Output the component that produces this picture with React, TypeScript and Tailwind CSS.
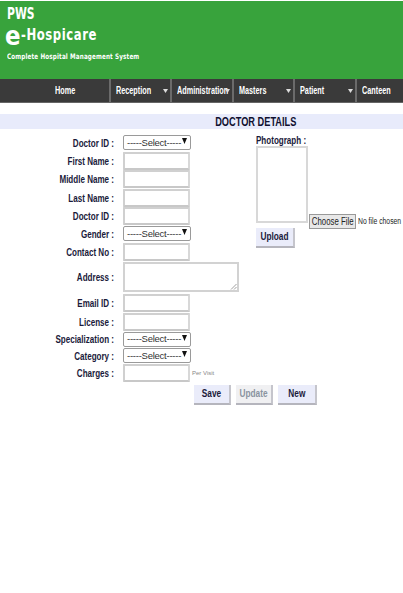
function Label({ children }: { children: string }) {
  return <span className="w-[114px] shrink-0 origin-right scale-x-[0.7] whitespace-nowrap pt-[2px] text-right text-[11.5px] font-bold leading-none text-[#1a1a3a]">{children}</span>;
}
function Row({ label, h, children }: { label: string; h: string; children: React.ReactNode }) {
  return (
    <div className={`flex items-center gap-[9px] ${h}`}>
      <Label>{label}</Label>
      {children}
    </div>
  );
}
function TextBox() {
  return <div className="h-[18px] w-[67px] shrink-0 rounded-[1px] border-2 border-t-[#d0d0d0] border-l-[#d0d0d0] border-r-[#d8d8d8] border-b-[#c8c8c8] bg-white" />;
}
function Select() {
  return (
    <div className="relative flex h-[15px] w-[68px] shrink-0 items-center rounded-[2px] border border-[#9a9a9a] bg-white pl-[3px] text-[9.5px] leading-none tracking-[-0.25px] text-[#333]">
      -----Select-----
      <svg className="absolute right-[3px] top-[2px]" width="5" height="6" viewBox="0 0 5 6"><path d="M0 0h5L2.5 6z" fill="#111" /></svg>
    </div>
  );
}
function Btn({ children, w, muted }: { children: string; w: string; muted?: boolean }) {
  return (
    <div className={`flex h-[20px] ${w} shrink-0 items-center justify-center border-b-2 border-r-2 border-b-[#b5b5bd] border-r-[#c5c5cc] ${muted ? "bg-[#f0f0f2] text-[#8a94a0]" : "bg-[#eaecfa] text-[#1a1a3a]"}`}>
      <span className="scale-x-[0.72] text-[11.5px] font-bold">{children}</span>
    </div>
  );
}
function NavItem({ label, w, caret, home }: { label: string; w: string; caret?: boolean; home?: boolean }) {
  return (
    <div className={`relative flex h-full ${w} shrink-0 items-center border-r-2 border-[#6b6b6b] ${home ? "pl-[55px]" : "pl-[5px]"}`}>
      <span className="origin-left scale-x-[0.66] whitespace-nowrap text-[11px] font-bold text-white">{label}</span>
      {caret && <svg className="absolute right-[2px] top-[10px]" width="5" height="4" viewBox="0 0 5 4"><path d="M0 0h5L2.5 4z" fill="#ddd" /></svg>}
    </div>
  );
}
export default function App() {
  return (
    <div className="h-[593px] w-[403px] overflow-hidden bg-white font-['Liberation_Sans',sans-serif]">
      <header className="h-[79px] border-t border-white bg-[#38a33c] pl-[7px] font-['DejaVu_Sans',sans-serif] font-bold text-white">
        <div className="origin-left scale-x-[0.72] pt-[5px] text-[15px] leading-[16px]">PWS</div>
        <div className="-ml-[2px] flex h-[27px] items-center">
          <span className="inline-block w-[16px] origin-left scale-x-[0.85] text-[27px] leading-[27px]">e</span>
          <span className="origin-left scale-x-[0.78] whitespace-nowrap text-[15px] tracking-[0.7px]">-Hospicare</span>
        </div>
        <div className="mt-[3px] origin-left scale-x-[0.75] whitespace-nowrap text-[7.5px] leading-[10px] tracking-[0.2px]">Complete Hospital Management System</div>
      </header>
      <nav className="flex h-[24px] border-b border-[#666] bg-[#3a3a3a]">
        <NavItem label="Home" w="w-[111px]" home />
        <NavItem label="Reception" w="w-[61px]" caret />
        <NavItem label="Administration" w="w-[62px]" caret />
        <NavItem label="Masters" w="w-[61px]" caret />
        <NavItem label="Patient" w="w-[62px]" caret />
        <div className="flex h-full items-center pl-[5px]"><span className="origin-left scale-x-[0.66] text-[11px] font-bold text-white">Canteen</span></div>
      </nav>
      <div className="mt-[11px] flex h-[15px] items-center justify-end bg-[#e8ebfb] pr-[107px]">
        <span className="origin-right scale-x-[0.71] whitespace-nowrap text-[13px] font-bold text-[#101030]">DOCTOR DETAILS</span>
      </div>
      <div className="mt-[5px] flex">
        <div className="w-[256px] shrink-0">
          <Row label="Doctor ID :" h="h-[17px]"><Select /></Row>
          <Row label="First Name :" h="h-[19px]"><TextBox /></Row>
          <Row label="Middle Name :" h="h-[18px]"><TextBox /></Row>
          <Row label="Last Name :" h="h-[19px]"><TextBox /></Row>
          <Row label="Doctor ID :" h="h-[18px]"><TextBox /></Row>
          <Row label="Gender :" h="h-[17px]"><Select /></Row>
          <Row label="Contact No :" h="h-[19px]"><TextBox /></Row>
          <Row label="Address :" h="h-[32px]">
            <div className="relative h-[30px] w-[116px] shrink-0 border-2 border-[#d2d2d2] bg-white">
              <svg className="absolute bottom-0 right-0" width="7" height="7" viewBox="0 0 7 7"><path d="M1 6.5 6.5 1M4 6.5 6.5 4" stroke="#888" strokeWidth="0.8" /></svg>
            </div>
          </Row>
          <Row label="Email ID :" h="h-[19px]"><TextBox /></Row>
          <Row label="License :" h="h-[19px]"><TextBox /></Row>
          <Row label="Specialization :" h="h-[16px]"><Select /></Row>
          <Row label="Category :" h="h-[17px]"><Select /></Row>
          <Row label="Charges :" h="h-[18px]">
            <div className="flex items-center gap-[2px]"><TextBox /><span className="whitespace-nowrap text-[6px] leading-[10px] text-[#888]">Per Visit</span></div>
          </Row>
        </div>
        <div className="min-w-0 flex-1">
          <div className="origin-left scale-x-[0.7] whitespace-nowrap text-[11.5px] font-bold leading-[12px] text-[#1a1a3a]">Photograph :</div>
          <div className="flex items-end">
            <div className="h-[77px] w-[52px] shrink-0 border-2 border-[#d8d8d8] bg-white" />
            <div className="-mb-[6px] ml-[1px] flex items-center whitespace-nowrap">
              <div className="flex h-[15px] w-[47px] shrink-0 items-center justify-center border border-[#999] bg-[#e8e8e8]"><span className="scale-x-[0.78] text-[10px] text-[#222]">Choose File</span></div>
              <span className="ml-[2px] w-[44px] shrink-0 origin-left scale-x-[0.8] text-[8.5px] text-[#222]">No file chosen</span>
            </div>
          </div>
          <div className="mt-[5px]"><Btn w="w-[39px]">Upload</Btn></div>
        </div>
      </div>
      <div className="mt-[3px] flex gap-[5px] pl-[194px]">
        <Btn w="w-[37px]">Save</Btn>
        <Btn w="w-[37px]" muted>Update</Btn>
        <Btn w="w-[39px]">New</Btn>
      </div>
    </div>
  );
}
